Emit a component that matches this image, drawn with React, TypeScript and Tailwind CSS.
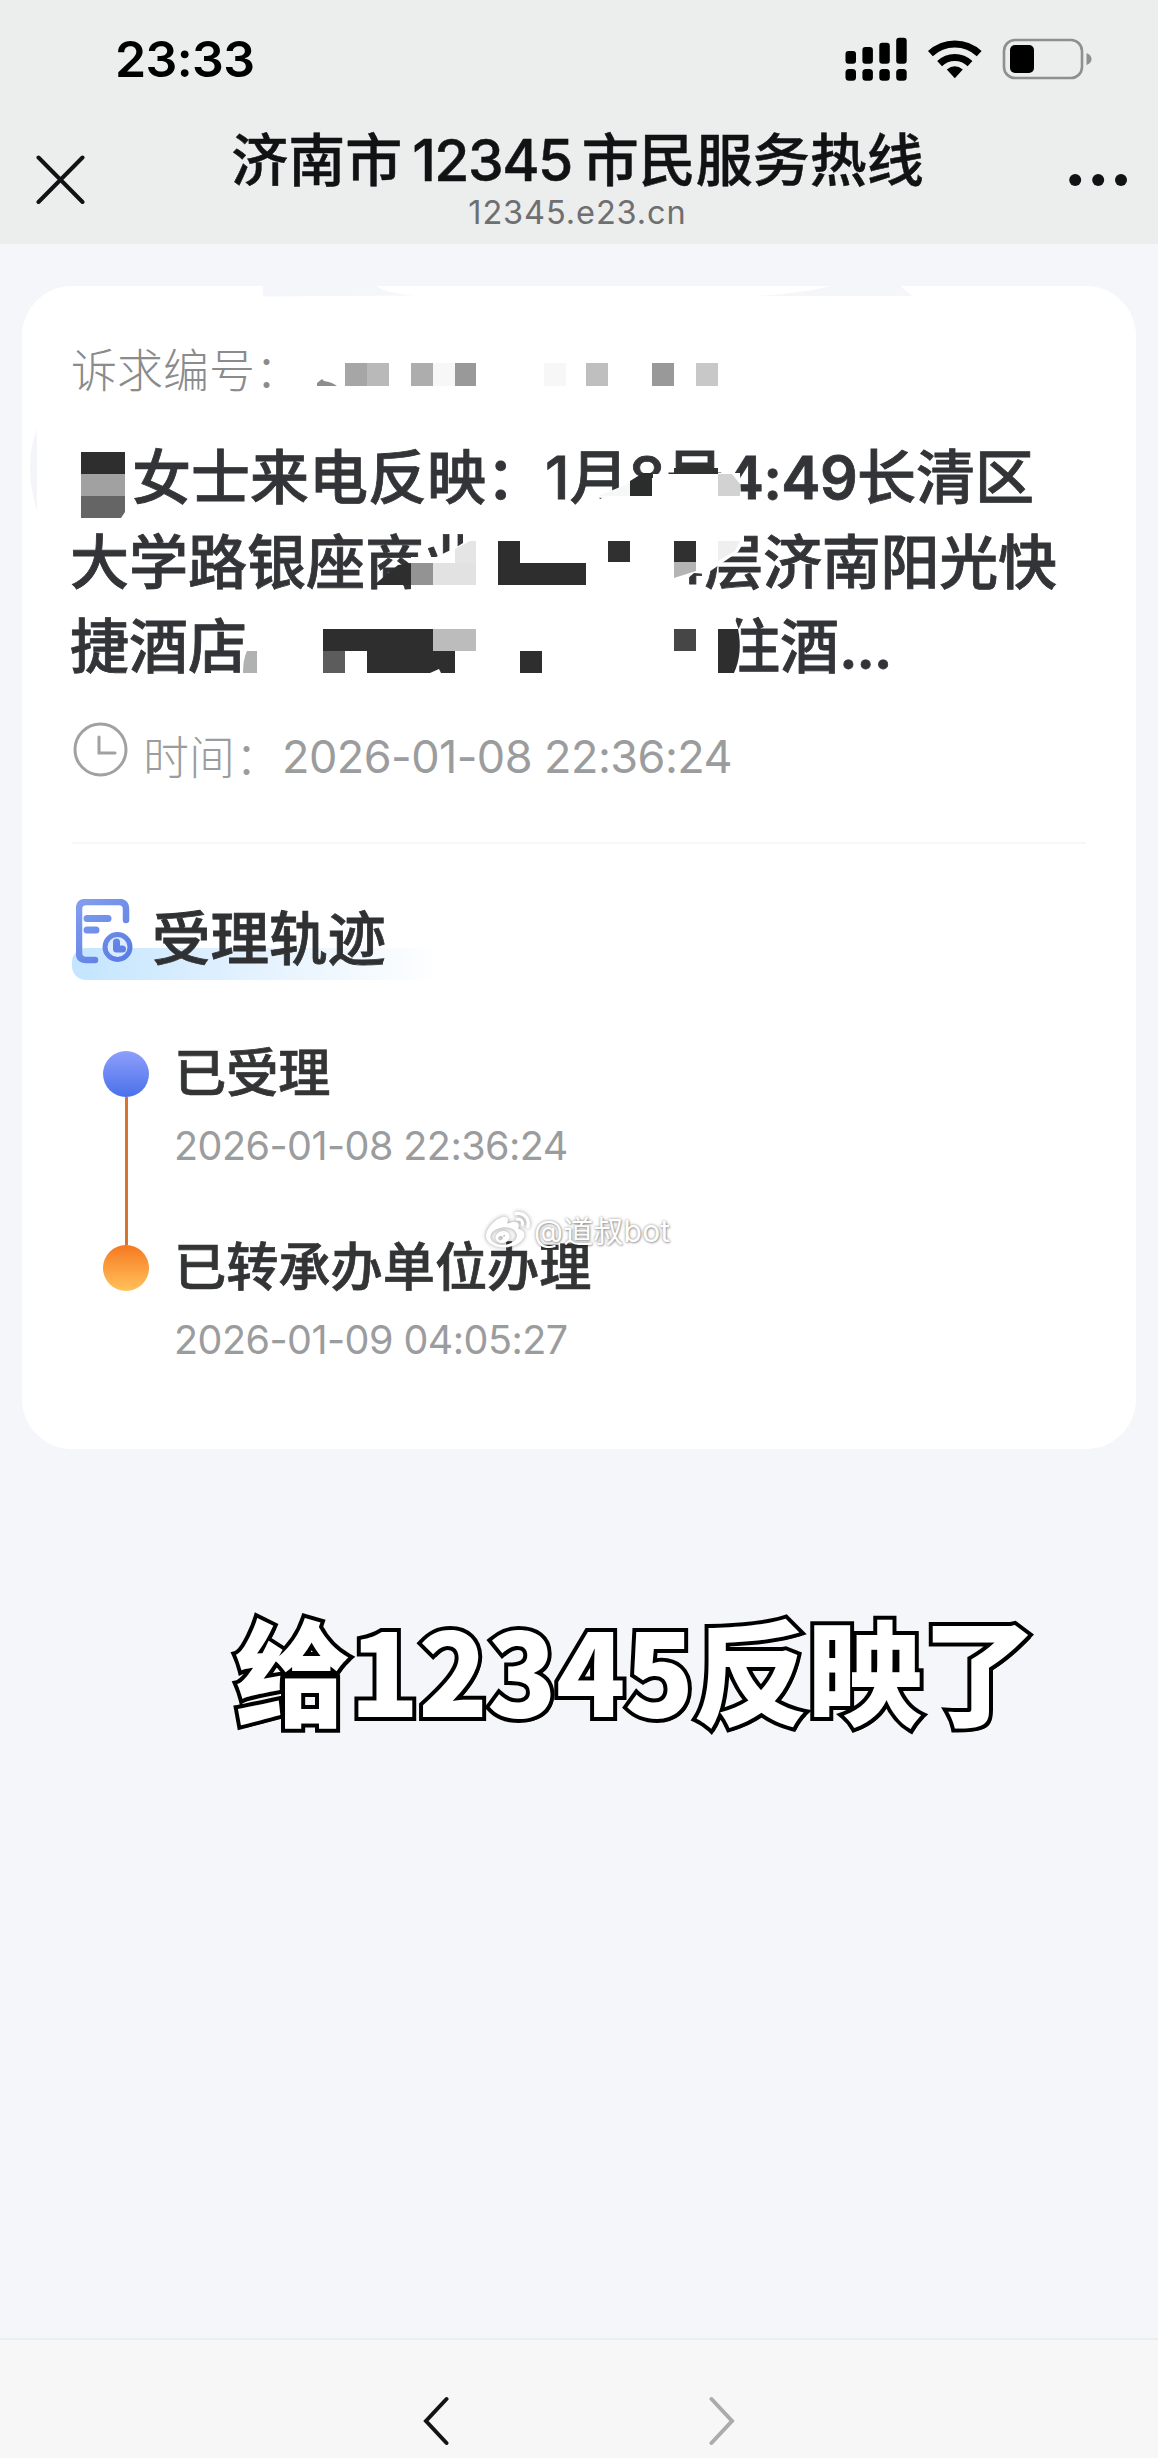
import { FaWeibo } from "react-icons/fa";

const STEPS = [
  { label: "已受理", time: "2026-01-08 22:36:24" },
  { label: "已转承办单位办理", time: "2026-01-09 04:05:27" },
];

// privacy mosaic: x, y, width, height, fill
const CELLS: [number, number, number, number, string][] = [
  // case number
  [345, 363, 22, 23, "#a6a6a6"],
  [367, 363, 22, 23, "#b9b9b9"],
  [411, 363, 22, 23, "#adadad"],
  [433, 363, 22, 23, "#f7f7f7"],
  [455, 363, 21, 23, "#999999"],
  [544, 363, 22, 23, "#f7f7f7"],
  [586, 363, 22, 23, "#bfbfbf"],
  [652, 363, 22, 23, "#999999"],
  [696, 363, 22, 23, "#c8c8c8"],
  // second line
  [411, 563, 22, 22, "#939393"],
  [433, 563, 43, 22, "#e2e2e2"],
  [498, 541, 22, 44, "#2e2e2e"],
  [520, 563, 66, 22, "#2e2e2e"],
  [608, 541, 22, 21, "#303030"],
  [674, 541, 22, 21, "#303030"],
  // third line
  [323, 629, 110, 22, "#2e2e2e"],
  [433, 629, 43, 22, "#bcbcbc"],
  [323, 651, 22, 22, "#5c5c5c"],
  [367, 651, 88, 22, "#2e2e2e"],
  [520, 651, 22, 22, "#2e2e2e"],
  [674, 629, 22, 22, "#464646"],
];

function StatusBar() {
  return (
    <div className="flex h-[117px] items-center justify-between pr-[66px] pl-[115px]">
      <span className="text-[50px] leading-[60px] font-semibold tracking-[-0.6px] text-black">
        23:33
      </span>
      <svg width="247" height="44" viewBox="845 35 247 44" aria-hidden>
        {[49, 45, 40.7, 35.7].map((top, i) => (
          <g key={top}>
            <rect x={845.5 + i * 16.9} y={top} width="10.5" height={61.7 - top} rx="3" />
            <rect x={845.5 + i * 16.9} y="67" width="10.5" height="11.7" rx="3.5" />
          </g>
        ))}
        <g fill="none" stroke="#000" strokeWidth="7">
          <path d="M930.4 51.6a35.5 35.5 0 0 1 48.8 0" />
          <path d="M939.6 61.6a22 22 0 0 1 30.4 0" />
        </g>
        <path d="M946.8 67.4q8-6.2 16 0l-8 8.8z" />
        <rect x="1004" y="38" width="78" height="38" rx="11" fill="none" stroke="#8e8f8f" strokeWidth="2.6" />
        <rect x="1010" y="43" width="24" height="28" rx="5" />
        <path d="M1086.5 51q5 2 5 6t-5 6z" fill="#8e8f8f" />
      </svg>
    </div>
  );
}

function NavBar() {
  return (
    <div className="flex h-[127px] justify-between pr-[31px] pl-[36px]">
      <svg className="mt-[38px]" width="50" height="50" viewBox="0 0 50 50" stroke="#111214" strokeWidth="4" strokeLinecap="round" aria-hidden>
        <path d="M2.500 2.500L46.500 47M46.500 2.500L2.500 47" />
      </svg>
      <div className="flex flex-col items-center pt-[12px] whitespace-nowrap">
        <h1 className="flex gap-[10px] text-[57px] leading-[64px] font-medium text-[#111214] [-webkit-text-stroke:0.5px_#111214]">
          <span>济南市</span>
          <span className="tracking-[-1.5px]">12345</span>
          <span>市民服务热线</span>
        </h1>
        <p className="text-[32.500px] leading-[40px] tracking-[0.9px] text-[#6e6f70]">12345.e23.cn</p>
      </div>
      <svg className="mt-[56px]" width="58" height="14" viewBox="0 0 58 14" fill="#111214" aria-hidden>
        <circle cx="6.200" cy="7" r="6" />
        <circle cx="29.200" cy="7" r="6" />
        <circle cx="52" cy="7" r="6" />
      </svg>
    </div>
  );
}

function Mosaic() {
  return (
    <svg className="absolute inset-0" width="1114" height="1163" viewBox="22 286 1114 1163" aria-hidden>
      {/* smears along the card edge */}
      <path d="M263 285h113q4 7 38 10.500l-151 1z" fill="#f4f6f9" />
      <path d="M757 296q56-4 76-11h66q5 4 13 11z" fill="#f4f6f9" />
      <path d="M37 429q-14 36 0 82z" fill="#f4f5f8" />
      <path d="M317 383l5-4 2 2q8 1 13 5h-20z" fill="#8d8d8d" />

      {/* surname */}
      <rect x="81" y="452" width="44" height="22" fill="#2e2e2e" />
      <rect x="81" y="474" width="44" height="22" fill="#a1a1a1" />
      <path d="M81 496h44v16l-4 6h-40z" fill="#656565" />

      {/* wiped strokes */}
      <path d="M600 499l16-9 15-6v-6h22v-4h65v-1h22l1 24v12H600z" fill="#fff" />
      <path d="M598 496l32-13v13z" fill="#f7f7f7" />
      <path d="M630 496v-15l13-8h9v23z" fill="#2b2c2c" />
      <path d="M674 474v-6h7q16-10 32 0h5v6z" fill="#303131" />
      <path d="M718 474h14l8 10v12h-22z" fill="#d2d2d2" />
      <path d="M411 557h25l19-9 8-5v-13h27v62h-79z" fill="#fff" />
      <path d="M455 549l15-8h6v22h-21z" fill="#e5e5e5" />
      <path d="M374 585l24-20 13-2v22z" fill="#2e2e2e" />
      <path d="M660 528h84v14l-6 10-32 22-12-1-16 14h-18z" fill="#fff" />
      <path d="M718 541h22l-5 10-17 10z" fill="#efefef" />
      <path d="M674 562h22v9l-22 7z" fill="#b4b4b4" />
      <path d="M718 616h16l7 20-4 40h-19z" fill="#fff" />
      <path d="M718 629h20q5 24-4 44h-16z" fill="#2e2e2e" />
      <path d="M247 651h10v22h-14q0-14 4-22z" fill="#b0b1b1" />

      {CELLS.map(([x, y, width, height, fill]) => (
        <rect key={`${x}-${y}`} x={x} y={y} width={width} height={height} fill={fill} />
      ))}
      <path d="M430 673l9-4 2 4z" fill="#fff" />
    </svg>
  );
}

function TrackIcon() {
  return (
    <svg className="relative ml-[4px]" width="58" height="66" viewBox="0 0 58 66" fill="none" stroke="url(#track)" strokeLinecap="round" aria-hidden>
      <defs>
        <linearGradient id="track" gradientUnits="userSpaceOnUse" x1="0" y1="0" x2="50" y2="64">
          <stop offset="0" stopColor="#85a0ee" />
          <stop offset="1" stopColor="#587be4" />
        </linearGradient>
      </defs>
      <path d="M50 21V10q0-7-7-7H10q-7 0-7 7v44q0 7 7 7h9" strokeWidth="6.500" />
      <path d="M11 19.500h21M11 31h9" strokeWidth="7" />
      <circle cx="41.500" cy="48" r="12.500" fill="#dcecff" strokeWidth="5" />
      <path d="M40.500 43v7h6" strokeWidth="7" strokeLinejoin="round" />
    </svg>
  );
}

function Watermark() {
  return (
    <div className="absolute top-[923px] left-[464px] flex items-center gap-[4px] whitespace-nowrap text-white">
      <FaWeibo className="h-[44px] w-[44px] drop-shadow-[0_0_2px_rgba(0,0,0,0.4)]" />
      <span className="text-[30px] leading-[44px] tracking-[0.2px] [text-shadow:0_0_3px_rgba(0,0,0,0.45),1px_1px_2px_rgba(0,0,0,0.25)]">
        @道叔bot
      </span>
    </div>
  );
}

function CaseCard() {
  return (
    <section className="relative mx-[22px] mt-[42px] h-[1163px] rounded-[50px] bg-white px-[50px] pt-[54px]">
      <p className="-ml-px text-[46px] leading-[60px] font-light text-[#8a8b8c]">诉求编号：</p>

      <h2 className="mt-[36px] -ml-[2px] text-[59px] leading-[84.670px] font-medium whitespace-nowrap text-[#333437] [-webkit-text-stroke:0.8px_#333437]">
        <span className="flex">
          <span className="w-[62px]" />
          女士来电反映：1月8号
          <span className="font-semibold tracking-[-0.7px]">4:49</span>
          长清区
        </span>
        <span className="flex">
          <span className="w-[596px]">大学路银座商业</span>
          <span className="tracking-[-0.3px]">4层济南阳光快</span>
        </span>
        <span className="flex">
          <span className="w-[651px]">捷酒店</span>
          住酒
          <span className="font-semibold tracking-[-1.5px]">...</span>
        </span>
      </h2>

      <div className="mt-[37px] flex h-[60px] items-center text-[45px] leading-[60px] text-[#9b9c9d]">
        <svg className="mb-[15px] ml-[1px]" width="55" height="55" viewBox="0 0 55 55" fill="none" stroke="#a0a1a2" strokeWidth="3" strokeLinecap="round" aria-hidden>
          <circle cx="27.500" cy="27.500" r="25.500" />
          <path d="M26 15v16h16" />
        </svg>
        <span className="ml-[15px] w-[139px] text-[46px] font-light">时间：</span>
        <span className="tracking-[-0.55px]">2026-01-08 22:36:24</span>
      </div>

      <div className="mt-[55px] h-[2px] bg-[#f6f7f8]" />

      <div className="relative mt-[55px] flex h-[81px] items-start">
        <div className="absolute bottom-0 left-0 h-[32px] w-[370px] rounded-l-[14px] bg-linear-to-r from-[#c3e5ff] via-[#e4f2fe] to-white" />
        <TrackIcon />
        <h3 className="relative mt-[10px] ml-[18px] text-[58.500px] leading-[60px] font-medium text-[#303133] [-webkit-text-stroke:0.8px_#303133]">
          受理轨迹
        </h3>
      </div>

      <div className="mt-[62px] flex gap-[25px] pl-[31px]">
        <div className="flex flex-col items-center pt-[9px]">
          <span className="h-[46px] w-[46px] rounded-full bg-linear-to-b from-[#8f9ffb] to-[#4a70ea]" />
          <span className="h-[148px] w-[3px] bg-[#d9742f]" />
          <span className="h-[46px] w-[46px] rounded-full bg-linear-to-b from-[#f5771f] to-[#ffc25a]" />
        </div>
        <ol className="flex flex-col gap-[70px] whitespace-nowrap">
          {STEPS.map((step) => (
            <li key={step.label} className="pt-px">
              <p className="text-[52.200px] leading-[60px] font-medium text-[#333435] [-webkit-text-stroke:0.7px_#333435]">
                {step.label}
              </p>
              <p className="mt-[23px] text-[39.500px] leading-[40px] tracking-[-0.55px] text-[#9b9c9e]">{step.time}</p>
            </li>
          ))}
        </ol>
      </div>

      <Mosaic />
      <Watermark />
    </section>
  );
}

function BottomBar() {
  return (
    <footer className="mt-auto flex h-[120px] justify-center gap-[260px] border-t-2 border-[#eaedf1] bg-[#f7f7f7] pt-[56px]">
      <svg width="26" height="50" viewBox="0 0 26 50" fill="none" stroke="#141416" strokeWidth="4" strokeLinecap="round" aria-hidden>
        <path d="M23.500 3L3 25l20.500 22" />
      </svg>
      <svg width="26" height="50" viewBox="0 0 26 50" fill="none" stroke="#ababab" strokeWidth="4" strokeLinecap="round" aria-hidden>
        <path d="M2.500 3L23 25L2.500 47" />
      </svg>
    </footer>
  );
}

export default function App() {
  return (
    <main className="flex h-[2458px] w-[1158px] flex-col overflow-hidden bg-[#f4f6f9] font-['Inter','Noto_Sans_CJK_SC',sans-serif]">
      <header className="bg-[#eceded]">
        <StatusBar />
        <NavBar />
      </header>
      <CaseCard />
      <p className="mt-[153px] ml-[235px] font-['Noto_Sans_CJK_SC',sans-serif] text-[114.500px] leading-[130px] font-black whitespace-nowrap text-white [-webkit-text-stroke:8px_#000] [paint-order:stroke_fill] [stroke-linejoin:round] [text-shadow:2px_2px_0_#000,3px_3px_0_#000]">
        给<span className="tracking-[-1px]">12345</span>反映了
      </p>
      <BottomBar />
    </main>
  );
}
